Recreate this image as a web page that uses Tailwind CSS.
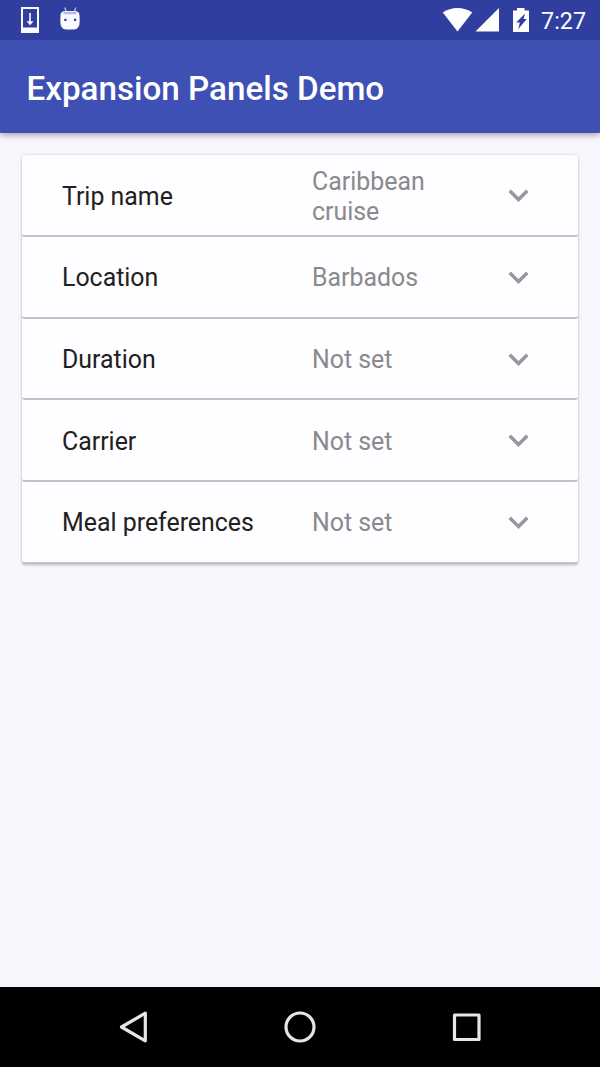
<!DOCTYPE html>
<html lang="en">
<head>
<meta charset="utf-8">
<title>Expansion Panels Demo</title>
<script src="https://cdn.jsdelivr.net/npm/@tailwindcss/browser@4"></script>
</head>
<body class="flex h-[1067px] w-[600px] flex-col overflow-hidden bg-[#f8f6fc] font-['Roboto',sans-serif]">
<header class="shrink-0 bg-[#3f50b5] shadow-[0_2px_6px_rgba(0,0,0,0.35)]">
  <div class="flex h-10 items-center justify-between bg-[#303f9f] pl-5 pr-3.5">
    <svg class="h-10 w-[62px]" viewBox="20 0 62 40" fill="none">
      <path fill="#fbfaff" fill-rule="evenodd" d="M21 7h18v26H21zM23 9v18.500h14V9z"/>
      <path stroke="#fbfaff" stroke-width="1.600" d="M30 13v10"/><path fill="#fbfaff" d="M26.500 21.300h7L30 25.300z"/>
      <path stroke="#b9bfe6" stroke-width="1.300" d="M64.800 7.500l1.500 4.500M75.800 7.500l-1.500 4.500"/>
      <path fill="#fbfaff" d="M60.500 15.500q0-4.500 5-4.500h9q5 0 5 4.500l.2 5.500q0 8.500-5.700 8.500h-8q-5.700 0-5.700-8.500z"/>
      <path stroke="#b4bae4" stroke-width="2.500" d="M63.500 13h13"/>
      <path fill="#303f9f" d="M64.300 18.800h2.200v2.200h-2.200zM74 18.800h2.200v2.200h-2.200z"/>
    </svg>
    <div class="flex items-center gap-[11px]">
      <svg class="h-10 w-[88px]" viewBox="442 0 88 40">
        <path fill="#fff" d="M442.800 12.600C451 6.500 464 6.500 472.200 12.600L457.500 31.400z"/>
        <path fill="#fff" d="M499 8v23.500h-23.500z"/>
        <path fill="#fff" d="M517 8h7.500v2.500h4.500v21.500h-16V10.500h4z"/>
        <path fill="#303f9f" d="M525 13.500L523.500 19H526.800L518.300 29L519.800 22.500H516.200z"/>
      </svg>
      <span class="pt-px text-[23.300px] leading-10 text-white">7:27</span>
    </div>
  </div>
  <h1 class="h-[93px] pl-[26.500px] text-[33.200px] font-medium leading-[97px] text-white">Expansion Panels Demo</h1>
</header>
<main class="flex-1 px-[22px] pt-[22.400px]">
  <ul class="rounded-[3px] text-[24.900px] leading-[29.500px] text-[#212121] shadow-[0_1px_3px_rgba(0,0,0,0.2),0_0_2px_rgba(0,0,0,0.15)]">
    <li class="flex h-[81.670px] items-center rounded-[3px] border-b-2 border-[#c2c1c5] bg-[#fefdff] pl-10 pr-12"><span class="w-[250px] pt-[3px]">Trip name</span><span class="w-[150px] pt-[3px] text-[#8a898c]">Caribbean cruise</span><svg class="ml-auto h-5 w-[23px] shrink-0" viewBox="0 0 23 20" fill="none" stroke="#98979b" stroke-width="3.400"><path d="M2.700 5.700l8.800 8.800 8.800-8.800"/></svg></li>
    <li class="flex h-[81.670px] items-center rounded-[3px] border-b-2 border-[#c2c1c5] bg-[#fefdff] pl-10 pr-12"><span class="w-[250px] pt-[2px]">Location</span><span class="w-[150px] pt-[2px] text-[#8a898c]">Barbados</span><svg class="ml-auto h-5 w-[23px] shrink-0" viewBox="0 0 23 20" fill="none" stroke="#98979b" stroke-width="3.400"><path d="M2.700 5.700l8.800 8.800 8.800-8.800"/></svg></li>
    <li class="flex h-[81.670px] items-center rounded-[3px] border-b-2 border-[#c2c1c5] bg-[#fefdff] pl-10 pr-12"><span class="w-[250px] pt-[3px]">Duration</span><span class="w-[150px] pt-[3px] text-[#8a898c]">Not set</span><svg class="ml-auto h-5 w-[23px] shrink-0" viewBox="0 0 23 20" fill="none" stroke="#98979b" stroke-width="3.400"><path d="M2.700 5.700l8.800 8.800 8.800-8.800"/></svg></li>
    <li class="flex h-[81.670px] items-center rounded-[3px] border-b-2 border-[#c2c1c5] bg-[#fefdff] pl-10 pr-12"><span class="w-[250px] pt-[3px]">Carrier</span><span class="w-[150px] pt-[3px] text-[#8a898c]">Not set</span><svg class="ml-auto h-5 w-[23px] shrink-0" viewBox="0 0 23 20" fill="none" stroke="#98979b" stroke-width="3.400"><path d="M2.700 5.700l8.800 8.800 8.800-8.800"/></svg></li>
    <li class="flex h-[81.670px] items-center rounded-[3px] border-b-2 border-[#c2c1c5] bg-[#fefdff] pl-10 pr-12"><span class="w-[250px] pt-[2px]">Meal preferences</span><span class="w-[150px] pt-[2px] text-[#8a898c]">Not set</span><svg class="ml-auto h-5 w-[23px] shrink-0" viewBox="0 0 23 20" fill="none" stroke="#98979b" stroke-width="3.400"><path d="M2.700 5.700l8.800 8.800 8.800-8.800"/></svg></li>
  </ul>
</main>
<nav class="flex h-20 shrink-0 items-center justify-between bg-black px-[116px]">
  <svg class="h-9 w-9" viewBox="116 1009 36 36" fill="none" stroke="#e8e5ea" stroke-width="3.200" stroke-linejoin="round"><path d="M121.500 1027L145.300 1013.200V1040.800z"/></svg>
  <svg class="h-9 w-9" viewBox="282 1009 36 36" fill="none" stroke="#e8e5ea" stroke-width="3.200"><circle cx="300" cy="1027" r="14"/></svg>
  <svg class="h-9 w-9" viewBox="448 1009 36 36" fill="none" stroke="#e8e5ea" stroke-width="3.200" stroke-linejoin="round"><path d="M454.500 1015h24.500v24.500h-24.500z"/></svg>
</nav>
</body>
</html>
